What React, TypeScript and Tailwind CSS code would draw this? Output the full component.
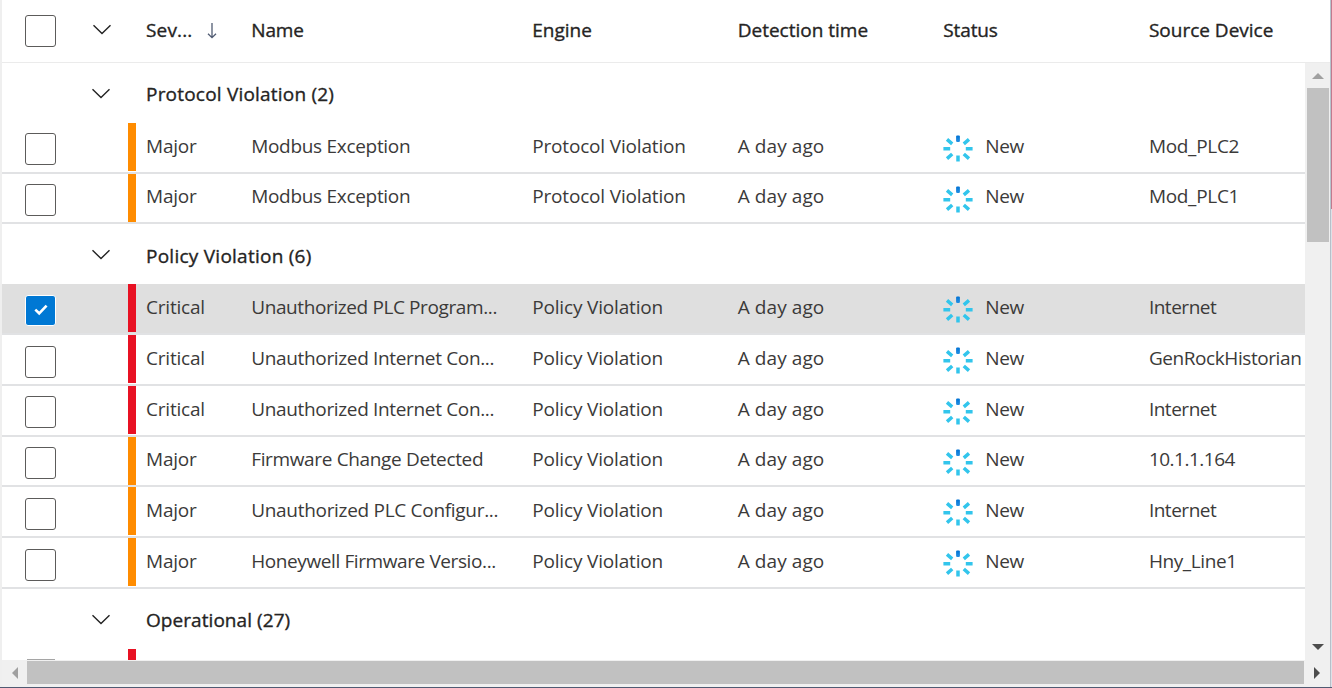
import React from "react";

type Row = {
  severity: "Major" | "Critical";
  name: string;
  nameTracking: string;
  engine: string;
  device: string;
  deviceTracking: string;
  selected?: boolean;
};

type Group = { title: string; titleTracking: string; rows: Row[] };

const groups: Group[] = [
  {
    title: "Protocol Violation (2)",
    titleTracking: "tracking-[0.2px]",
    rows: [
      { severity: "Major", name: "Modbus Exception", nameTracking: "tracking-[-0.3px]", engine: "Protocol Violation", device: "Mod_PLC2", deviceTracking: "tracking-[-0.3px]" },
      { severity: "Major", name: "Modbus Exception", nameTracking: "tracking-[-0.3px]", engine: "Protocol Violation", device: "Mod_PLC1", deviceTracking: "tracking-[-0.3px]" },
    ],
  },
  {
    title: "Policy Violation (6)",
    titleTracking: "tracking-[0.25px]",
    rows: [
      { severity: "Critical", name: "Unauthorized PLC Program...", nameTracking: "tracking-[-0.39px]", engine: "Policy Violation", device: "Internet", deviceTracking: "tracking-[-0.48px]", selected: true },
      { severity: "Critical", name: "Unauthorized Internet Con...", nameTracking: "tracking-[-0.34px]", engine: "Policy Violation", device: "GenRockHistorian", deviceTracking: "tracking-[-0.42px]" },
      { severity: "Critical", name: "Unauthorized Internet Con...", nameTracking: "tracking-[-0.34px]", engine: "Policy Violation", device: "Internet", deviceTracking: "tracking-[-0.48px]" },
      { severity: "Major", name: "Firmware Change Detected", nameTracking: "tracking-[-0.35px]", engine: "Policy Violation", device: "10.1.1.164", deviceTracking: "tracking-[-0.5px]" },
      { severity: "Major", name: "Unauthorized PLC Configur...", nameTracking: "tracking-[-0.3px]", engine: "Policy Violation", device: "Internet", deviceTracking: "tracking-[-0.48px]" },
      { severity: "Major", name: "Honeywell Firmware Versio...", nameTracking: "tracking-[-0.4px]", engine: "Policy Violation", device: "Hny_Line1", deviceTracking: "tracking-[-0.4px]" },
    ],
  },
  { title: "Operational (27)", titleTracking: "tracking-[0.06px]", rows: [] },
];

const columns =
  "grid grid-cols-[90px_36px_18px_105.2px_281px_205.5px_205.5px_205.7px_156px]";

const heading = "font-normal text-[#252423] [-webkit-text-stroke:0.35px_#252423]";

function Chevron() {
  return (
    <svg className="block h-[11px] w-[19px]" viewBox="0 0 19 11" fill="none" stroke="#222" strokeWidth="1.4">
      <path d="M.5 1.2 9 9.6 17.5 1.2" />
    </svg>
  );
}

function Checkbox({ checked = false }: { checked?: boolean }) {
  if (checked) {
    return (
      <div className="ml-[23px] flex h-[31px] w-[31px] items-center justify-center rounded-[3px] border border-white bg-[#0078d4]">
        <svg className="h-[12px] w-[14px]" viewBox="0 0 14 12" fill="none" stroke="#fff" strokeWidth="2.6">
          <path d="M1.3 5.6 5.2 9.3 12.6 1.6" />
        </svg>
      </div>
    );
  }
  return <div className="ml-[23px] h-[32px] w-[31px] rounded-[3px] border-[1.5px] border-[#5c5b5a] bg-white" />;
}

function Spinner() {
  return (
    <svg className="block h-[28px] w-[30px] shrink-0" viewBox="0 0 30 28" fill="none" stroke="#32c5ec" strokeWidth="3.5">
      <defs>
        <linearGradient id="tick" x1="0" y1="0" x2="0" y2="1">
          <stop offset="0" stopColor="#0072d4" />
          <stop offset="1" stopColor="#2490e4" />
        </linearGradient>
      </defs>
      <rect x="13.1" y=".6" width="3.8" height="6.4" rx="1" fill="url(#tick)" stroke="none" />
      <path d="M15 20.6V26.4M.4 13.8H7.2M22.8 13.8H29.6M4 4.4 9.2 8.8M26 4.4 20.8 8.8M4 23.6 9.2 19M26 23.6 20.8 19" />
    </svg>
  );
}

function AlertRow({ row }: { row: Row }) {
  return (
    <div
      className={`${columns} h-[50.8px] shrink-0 border-b-2 border-[#e1e2e4] text-[#3b3a39] ${row.selected ? "bg-[#dfdfdf]" : ""}`}
    >
      <div className="pt-[10.6px]">
        <Checkbox checked={row.selected} />
      </div>
      <div />
      <div className="h-[48px] w-[8px]">
        <div className={`h-full w-full ${row.severity === "Critical" ? "bg-[#e81123]" : "bg-[#ff8c00]"}`} />
      </div>
      <div className="pt-[8.8px] tracking-[-0.2px]">{row.severity}</div>
      <div className={`pt-[8.8px] ${row.nameTracking}`}>{row.name}</div>
      <div className="pt-[8.8px] tracking-[-0.17px]">{row.engine}</div>
      <div className="pt-[8.8px] tracking-[0.08px]">A day ago</div>
      <div className="flex gap-[12px]">
        <div className="pt-[12px]"><Spinner /></div>
        <div className="pt-[8.8px] tracking-[-0.3px]">New</div>
      </div>
      <div className={`pt-[8.8px] ${row.deviceTracking}`}>{row.device}</div>
    </div>
  );
}

function Arrow({ d, color }: { d: string; color: string }) {
  return (
    <svg className="h-[12px] w-[12px]" viewBox="0 0 12 12" fill={color}>
      <path d={d} />
    </svg>
  );
}

export default function App() {
  return (
    <div className="flex h-[688px] w-[1332px] flex-col overflow-hidden border-b border-[#505a72] bg-white font-['Open_Sans','Noto_Sans',sans-serif] text-[19px] leading-[28px]">
      <div className="flex min-h-0 flex-1 border-l-2 border-[#efefef]">
        <div className="flex w-[1328px] flex-col">
          <div className={`${columns} h-[63px] shrink-0 border-b border-[#ebebeb] ${heading}`}>
            <div className="pt-[15px]"><Checkbox /></div>
            <div className="pt-[24px] pl-[1px]"><Chevron /></div>
            <div />
            <div className="flex pt-[16px]">
              <span className="w-[61px] tracking-[0.15px]">Sev...</span>
              <svg className="mt-[7px] h-[16px] w-[10px]" viewBox="0 0 10 16" fill="none" stroke="#515c73" strokeWidth="1.3">
                <path d="M5 0V14.5M1 10.7 5 14.6 9 10.7" />
              </svg>
            </div>
            <div className="pt-[16px] tracking-[-0.1px]">Name</div>
            <div className="pt-[16px]">Engine</div>
            <div className="pt-[16px]">Detection time</div>
            <div className="pt-[16px] tracking-[-0.1px]">Status</div>
            <div className="pt-[16px]">Source Device</div>
          </div>
          <div className="flex min-h-0 flex-1">
            <div className="flex w-[1303px] flex-col overflow-hidden">
              {groups.map((group) => (
                <React.Fragment key={group.title}>
                  <div className={`${columns} h-[59.8px] shrink-0 ${heading}`}>
                    <div />
                    <div className="pt-[25px]"><Chevron /></div>
                    <div />
                    <div className={`pt-[17.3px] whitespace-nowrap ${group.titleTracking}`}>{group.title}</div>
                  </div>
                  {group.rows.map((row, i) => (
                    <AlertRow key={i} row={row} />
                  ))}
                </React.Fragment>
              ))}
              <div className="flex min-h-0 flex-1 items-end">
                <div className="ml-[25px] h-[1.5px] w-[28px] bg-[#a5a5a5]" />
                <div className="ml-[73px] h-full w-[8px] bg-[#e81123]" />
              </div>
            </div>
            <div className="flex w-[25px] flex-col bg-[#f0f0f0]">
              <div className="flex h-[25px] items-center justify-center"><Arrow d="M0 9 6 3 12 9Z" color="#a0a0a0" /></div>
              <div className="ml-[2px] h-[154px] w-[22px] bg-[#c1c1c1]" />
              <div className="flex flex-1 items-end justify-center pb-[7px]"><Arrow d="M0 3 6 9 12 3Z" color="#4d4d4d" /></div>
            </div>
          </div>
          <div className="flex h-[27px] shrink-0 bg-[#f0f0f0] pt-[1px]">
            <div className="flex h-[23px] w-[25px] items-center justify-center"><Arrow d="M9 0 3 6 9 12Z" color="#a0a0a0" /></div>
            <div className="h-[23px] w-[1277px] bg-[#c1c1c1]" />
            <div className="flex h-[23px] flex-1 items-center justify-center"><Arrow d="M3 0 9 6 3 12Z" color="#4d4d4d" /></div>
          </div>
        </div>
        <div className="flex w-[2px] flex-col">
          <div className="h-[209px] border-l border-[#b5c4cc] bg-[#c27a8e]" />
          <div className="flex-1 border-l border-[#b7bfc9] bg-[#dde1e7]" />
        </div>
      </div>
    </div>
  );
}
